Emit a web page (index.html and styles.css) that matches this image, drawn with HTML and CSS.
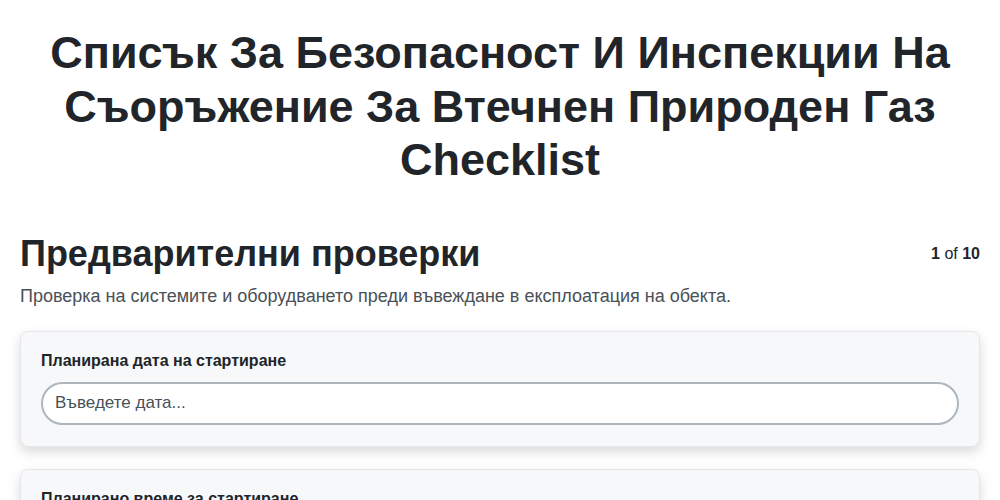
FILE: index.html
```html
<!DOCTYPE html>
<html lang="bg">
<head>
  <meta charset="utf-8">
  <title>Checklist</title>
  <meta name="viewport" content="width=device-width, initial-scale=1.0">
  <link rel="stylesheet" href="styles.css">
</head>
<body>
  <div class="container">
    <h1 class="page-title">Списък За Безопасност И Инспекции На Съоръжение За Втечнен Природен Газ Checklist</h1>

    <div class="section-head">
      <h2>Предварителни проверки</h2>
      <span class="step"><strong>1</strong> of <strong>10</strong></span>
    </div>
    <p class="section-desc">Проверка на системите и оборудването преди въвеждане в експлоатация на обекта.</p>

    <div class="card">
      <label class="field-label" for="startDate">Планирана дата на стартиране</label>
      <input class="field-input" id="startDate" type="text" placeholder="Въведете дата...">
    </div>

    <div class="card">
      <label class="field-label" for="startTime">Планирано време за стартиране</label>
      <input class="field-input" id="startTime" type="text" placeholder="Въведете час...">
    </div>
  </div>
</body>
</html>
```

FILE: styles.css
```css
body {
  font-family: "Liberation Sans", Arial, sans-serif;
  margin: 0;
  background-color: #ffffff;
  color: #212529;
}
.container {
  padding: 20px;
}
.page-title {
  font-size: 45px;
  line-height: 1.19;
  font-weight: 700;
  text-align: center;
  margin: 6px 0 45px;
  color: #212529;
}
.section-head {
  display: flex;
  justify-content: space-between;
  align-items: center;
}
.section-head h2 {
  font-size: 36px;
  line-height: 1.2;
  margin: 0;
  font-weight: 700;
}
.step {
  font-size: 16px;
  color: #212529;
  padding-top: 1px;
}
.section-desc {
  font-size: 18px;
  line-height: 1.5;
  color: #495057;
  margin: 8px 0 21px;
}
.card {
  background-color: #f7f8fa;
  border: 1px solid #e6e7eb;
  border-radius: 8px;
  padding: 20px 20px 21px;
  margin-bottom: 22px;
  box-shadow: 0 5px 12px rgba(0, 0, 0, 0.15);
}
.field-label {
  display: block;
  font-size: 16px;
  line-height: 18px;
  font-weight: 700;
  color: #212529;
  margin-bottom: 12px;
}
.field-input {
  display: block;
  width: 100%;
  box-sizing: border-box;
  height: 43px;
  padding: 0 12px;
  border: 2px solid #adb5bd;
  border-radius: 22px;
  background-color: #ffffff;
  font-family: "Liberation Sans", Arial, sans-serif;
  font-size: 17px;
  color: #212529;
  outline: none;
}
.field-input::placeholder {
  color: #495057;
}
```
